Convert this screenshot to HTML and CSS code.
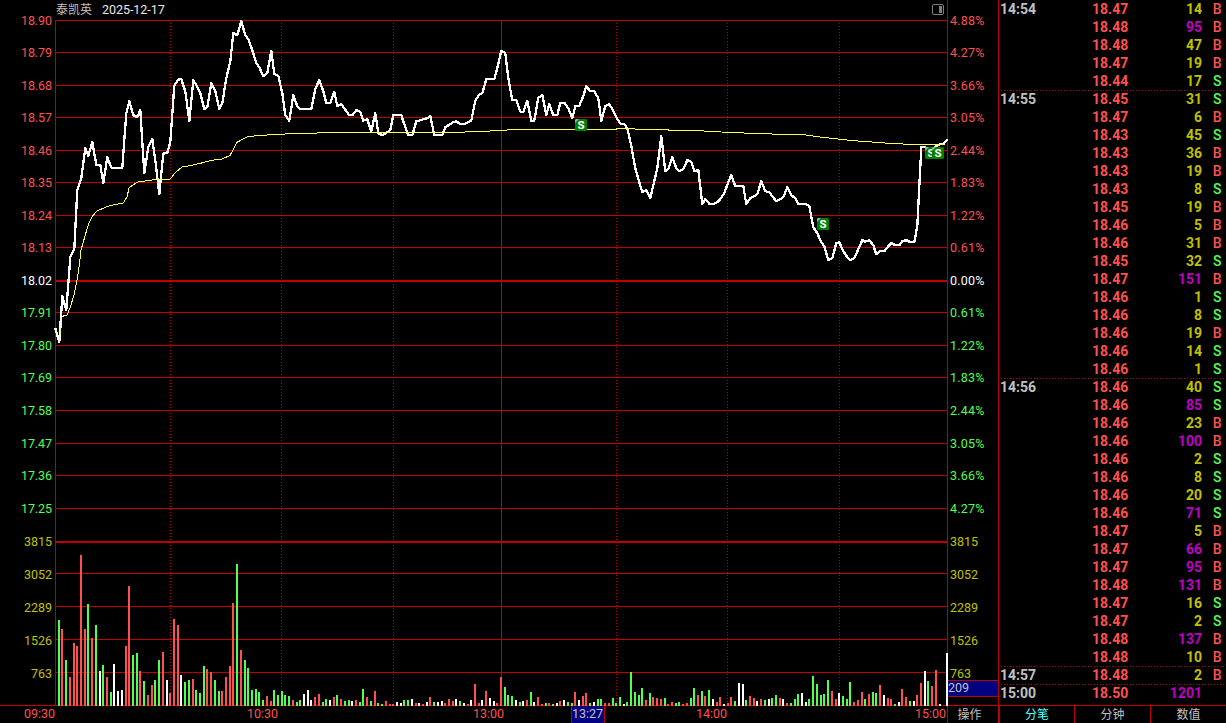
FILE: index.html
```html
<!DOCTYPE html>
<html lang="zh-CN">
<head>
<meta charset="utf-8">
<title>泰凯英 2025-12-17</title>
<link rel="stylesheet" href="styles.css">
</head>
<body>
<div class="app">
  <main class="chart">
    <header class="chart-head">
      <span class="stock-name">泰凯英</span>
      <span class="stock-date">2025-12-17</span>
      <svg class="panel-icon" width="12" height="12" viewBox="0 0 12 12">
        <rect x="0.5" y="0.5" width="11" height="10" rx="1.5" fill="none" stroke="#808080"/>
        <rect x="7" y="2" width="3" height="7" fill="#808080"/>
      </svg>
    </header>
    <svg class="plot" id="plot" width="999" height="707" viewBox="0 16 999 707"></svg>
  </main>
  <aside class="tape">
    <div class="ticks" id="ticks"></div>
    <nav class="tabs">
      <span class="tab tab-active">分笔</span>
      <span class="tab">分钟</span>
      <span class="tab">数值</span>
    </nav>
  </aside>
</div>
<script src="app.js"></script>
</body>
</html>
```
FILE: styles.css
```css
* { box-sizing: border-box; }
body {
  margin: 0;
  background: #000;
  font-family: Roboto, "Liberation Sans", "Noto Sans CJK SC", sans-serif;
  overflow: hidden;
}
.app { display: flex; width: 1226px; height: 723px; }
.chart { width: 998px; display: flex; flex-direction: column; flex: none; }
.chart-head {
  height: 16px;
  display: flex;
  align-items: center;
  padding: 4px 54px 0 56px;
  font-size: 12.5px;
  line-height: 12px;
  color: #e8e8e8;
}
.stock-name { color: #c0c0c0; font-size: 12px; width: 46px; }
.stock-date { letter-spacing: -0.05px; }
.panel-icon { margin-left: auto; }
.plot { display: block; overflow: visible; flex: none; }

.line { fill: #c00000; }
.dots { stroke: #c00000; stroke-width: 1; stroke-dasharray: 1 2; }
.crisp { shape-rendering: crispEdges; }
.price { fill: none; stroke: #fff; stroke-width: 2.3; stroke-linejoin: round; shape-rendering: crispEdges; }
.average { fill: none; stroke: #ffff50; stroke-width: 1; shape-rendering: crispEdges; }
.label { font-size: 12.5px; }
.up { fill: #ff5050; color: #ff5050; }
.down { fill: #50ff50; color: #50ff50; }
.flat { fill: #fff; color: #fff; }
.volume { fill: #c0c000; color: #c0c000; }
.gray { fill: #c0c0c0; }
.cursor-box { fill: #000080; }
.badge-box { fill: #008000; }
.badge-fold { fill: #a0b0a0; }
.badge-text { fill: #fff; font-size: 11.5px; font-weight: bold; text-anchor: middle; }
.action { fill: #c0c0c0; font-size: 12px; font-family: "Noto Sans CJK SC", sans-serif; }

.tape {
  width: 228px;
  flex: none;
  border-left: 1px solid #c00000;
  display: flex;
  flex-direction: column;
}
.ticks { height: 705px; padding: 0 2px; }
.tick {
  height: 18px;
  display: grid;
  grid-template-columns: 91px 60px 50px 1fr;
  font-size: 14px;
  font-weight: bold;
  line-height: 19px;
  white-space: nowrap;
}
.tick-start {
  background: repeating-linear-gradient(90deg, #c00000 0 1px, transparent 1px 3px) top / 100% 1px no-repeat;
}
.tick-time { color: #c0c0c0; margin-left: -1px; }
.tick-qty { text-align: right; color: #c0c000; }
.tick-big { color: #c000c0; }
.tick-side { text-align: right; font-weight: 500; padding-right: 2.5px; }
.tabs {
  height: 18px;
  display: grid;
  grid-template-columns: 76px 76px 75px;
  border-top: 1px solid #c00000;
}
.tab {
  border-right: 1px solid #c00000;
  color: #c0c0c0;
  font-size: 12px;
  line-height: 18px;
  text-align: center;
}
.tab:last-child { border-right: 0; }
.tab-active { color: #50ffff; border-left: 1px solid #c00000; }
```
FILE: app.js
```js
const plot = document.getElementById('plot');
const parts = [];
const xAt = i => Math.round(55 + i * 892 / 240);
const rect = (x, y, w, h, c) => parts.push(`<rect class="${c} crisp" x="${x}" y="${y}" width="${w}" height="${h}"/>`);
const label = (x, y, w, c, t) => parts.push(`<text class="label ${c}" x="${x}" y="${y}" textLength="${w}">${t}</text>`);

// Price grid
const rowsY = [20, 52, 85, 117, 150, 182, 215, 247, 280, 312, 345, 377, 410, 443, 475, 508];
const prices = ['18.90', '18.79', '18.68', '18.57', '18.46', '18.35', '18.24', '18.13', '18.02', '17.91', '17.80', '17.69', '17.58', '17.47', '17.36', '17.25'];
const percents = ['4.88', '4.27', '3.66', '3.05', '2.44', '1.83', '1.22', '0.61', '0.00', '0.61', '1.22', '1.83', '2.44', '3.05', '3.66', '4.27'];
rowsY.forEach((y, i) => {
  const tone = i < 8 ? 'up' : i === 8 ? 'flat' : 'down';
  rect(55, y, 893, i === 8 ? 2 : 1, 'line');
  label(21, y + 5, 31, tone, prices[i]);
  label(950, y + 5, 34.5, tone, percents[i] + '%');
});

// Volume grid
[[541, 3815], [573, 3052], [606, 2289], [639, 1526], [672, 763]].forEach(([y, v], i) => {
  rect(55, y, 893, i === 0 ? 2 : 1, 'line');
  const w = String(v).length * 7;
  const base = i === 0 ? 546 : y + 6;
  label(52 - w, base, w, 'volume', v);
  label(950, base, w, 'volume', v);
});
rect(0, 705, 999, 1, 'line');

// Time grid
rect(55, 20, 1, 686, 'line');
rect(501, 20, 1, 686, 'line');
rect(947, 0, 1, 723, 'line');
[170, 281, 393, 616, 727, 839].forEach(x =>
  parts.push(`<line class="dots crisp" x1="${x + 0.5}" x2="${x + 0.5}" y1="23" y2="705"/>`));

// Volume bars: colour code followed by height
const bars = `g86 r77 g46 r29 r63 r60 r151 r77 g102 r68 g81 w35 g41 r29 g14 w42 w15 w16 r60 r120
g51 g53 r35 g25 r11 r21 g26 g46 r54 w26 r13 r87 r81 w31 g24 g26 r27 g16 g13 g40
r37 r34 g26 g15 r15 r29 r40 r103 g142 r56 g46 g38 g16 g17 g14 g6 r10 r5 g16 g11
g15 g11 g10 r6 g4 g6 w12 w16 w6 r9 r12 g4 g7 w6 r9 g11 r7 g5 g6 w5
r6 g4 g17 r9 g5 r15 g3 g2 r5 r2 r2 w4 w3 g6 g6 w7 r3 w3 r2 w4
r9 g4 w4 w5 r3 r7 r5 w7 g5 w3 r2 w6 r22 r3 w6 r15 w8 w5 r3 r29
g19 g11 g10 w6 g4 w5 r6 g14 w4 r9 r2 g3 r3 g2 w3 r5 w6 g4 g3 r14
w6 r10 r13 g3 w4 g7 g7 r3 r3 g8 g3 g9 w2 g4 g34 g14 g11 g18 r6 g13
r9 r8 r7 g8 r2 r4 g3 g4 r2 r3 g8 g18 r11 g15 r10 g16 w7 r4 r9 w2
r3 r9 g5 w23 w22 g6 r10 r8 w5 r7 g6 w7 g8 g11 r8 w7 r3 g3 g7 g12
w13 w4 g7 g30 g22 g11 g12 g26 r15 r7 w13 g10 g7 g24 r4 r6 r14 g7 r12 g14
g13 r21 w11 r8 r7 g2 w4 r17 r9 g5 w5 r11 r23 w35 g25 r20 r36 w2 r0 w53`.split(/\s+/);
const tones = { r: 'up', g: 'down', w: 'flat' };
bars.forEach((b, k) => {
  const h = Number(b.slice(1));
  if (h) rect(xAt(k + 1) - 1, 706 - h, 2, h, tones[b[0]]);
});

// Minute price line
const series = [328, 342, 296, 310, 257, 249, 190, 178, 148, 155.5, 142, 164.5, 165, 183, 157, 167.5, 167.5, 167.5, 167.5, 113,
101, 115, 117, 110, 173, 147, 139, 160, 194, 153.5, 152.5, 142, 85.5, 79.5, 79, 91, 121, 80, 85, 93,
109, 107, 83, 91, 109, 103, 78, 61, 33, 35, 21, 35, 39, 50, 63, 67, 76, 73, 50.5, 74,
75.5, 93, 115, 120.5, 95, 106, 109, 109, 109, 109, 88.5, 80, 91, 103, 103, 91.5, 106, 104, 109.5, 115,
115, 110, 111.5, 120.5, 119, 131, 113, 133, 135, 132.5, 130, 115, 115, 115, 124, 135, 135, 121, 120.5, 119,
118, 116, 135, 135, 135, 127, 124.5, 122, 121, 124, 124, 122, 120.5, 100.5, 94.5, 93, 79, 79, 79, 68,
50.5, 53, 78, 100, 100, 111.5, 111.5, 100.5, 120.5, 120.5, 97.5, 95, 115, 104, 115, 115, 102.5, 102.5, 108, 118,
106, 105.5, 96, 86, 91, 91, 98, 120.5, 106, 104, 110.5, 117, 123.5, 124, 128, 146, 168, 182, 192, 190,
198, 185, 168, 136, 171, 169, 157, 168, 171, 169, 160, 161.5, 171, 169.5, 204, 199, 203.5, 204, 202, 199,
193, 182, 175, 186, 186, 186, 204, 198, 196, 194, 181, 191, 192, 196, 201, 199, 197, 187, 195, 198,
204, 204, 204, 206, 227, 233, 242, 246, 260, 258, 243, 242, 251, 257, 260, 258, 249, 240, 241.5, 240,
245, 254, 251, 251, 246, 243, 245, 245, 241, 240, 242, 242, 226, 147, 147, 149, 150, 146, 144, 144, 139];
parts.push(`<polyline class="price" points="${series.map((y, i) => xAt(i) + 0.3 + ',' + (y + 0.2)).join(' ')}"/>`);

// Average price line
const average = [[59, 342], [61, 328], [62, 317], [63.5, 316], [67, 315], [70, 308], [74, 295], [77.5, 278], [79.5, 263], [81, 250],
[85, 236], [88.5, 224], [92.5, 216], [97, 211], [107, 206.5], [115, 204.5], [123, 203.3], [127, 197], [129, 188], [132, 185.5],
[138, 182], [145, 181], [154, 179.7], [170, 179.3], [175, 173], [182, 167], [188, 166], [200, 163.4], [212, 160.3], [222, 159], [230, 155.5],
[237, 142.3], [248, 136.5], [270, 134.8], [291, 133.7], [332, 132.6], [450, 132.4], [481, 131.6], [500, 130.4], [515, 129.5], [615, 129.4],
[618, 128.6], [630, 128.8], [649, 129.6], [697, 130.6], [730, 132.5], [775, 134.1], [805, 134.8], [823, 137.4], [853, 140.6], [890, 143.4],
[913, 144.5], [944, 144.5]];
parts.push(`<polyline class="average" points="${average.map(p => p.join(',')).join(' ')}"/>`);

// Trade markers
[[575, 119], [817, 218], [925, 147], [932, 147]].forEach(([x, y]) => parts.push(
  `<rect class="badge-box" x="${x}" y="${y}" width="12" height="12" rx="1.5"/>
   <path class="badge-fold" d="M${x} ${y + 4}V${y + 1}L${x + 1} ${y}H${x + 4}Z"/>
   <text class="badge-text" x="${x + 6}" y="${y + 10}">S</text>`));

// Time axis
label(24, 718, 31, 'up', '09:30');
label(247, 718, 31, 'up', '10:30');
label(473, 718, 31, 'up', '13:00');
label(696, 718, 31, 'up', '14:00');
label(915, 718, 31, 'up', '15:00');
rect(571, 706, 34, 17, 'line');
rect(572, 706, 32, 17, 'cursor-box');
label(572, 717.5, 31, 'gray', '13:27');

// Cursor volume and action button
rect(948, 680, 50, 17, 'line');
rect(948, 681, 50, 15, 'cursor-box');
label(948, 692, 21, 'gray', '209');
parts.push('<text class="action" x="957.5" y="719">操作</text>');
plot.innerHTML = parts.join('');

// Trade tape
const trades = `14:54 18.47 14 B|18.48 95 B|18.48 47 B|18.47 19 B|18.44 17 S|14:55 18.45 31 S|18.47 6 B|18.43 45 S|18.43 36 B|18.43 19 B|18.43 8 S|18.45 19 B|18.46 5 B|18.46 31 B|18.45 32 S|18.47 151 B|18.46 1 S|18.46 8 S|18.46 19 B|18.46 14 S|18.46 1 S|14:56 18.46 40 S|18.46 85 S|18.46 23 B|18.46 100 B|18.46 2 S|18.46 8 S|18.46 20 S|18.46 71 S|18.47 5 B|18.47 66 B|18.47 95 B|18.48 131 B|18.47 16 S|18.47 2 S|18.48 137 B|18.48 10 B|14:57 18.48 2 B|15:00 18.50 1201`;
document.getElementById('ticks').innerHTML = trades.split('|').map((row, i) => {
  const f = row.split(' ');
  const time = f[0].includes(':') ? f.shift() : '';
  const [price, qty, side = ''] = f;
  return `<div class="tick ${time && i ? 'tick-start' : ''}">
    <span class="tick-time">${time}</span><span class="tick-price up">${price}</span>
    <span class="tick-qty ${qty >= 50 ? 'tick-big' : ''}">${qty}</span>
    <span class="tick-side ${side === 'S' ? 'down' : 'up'}">${side}</span></div>`;
}).join('');
```
